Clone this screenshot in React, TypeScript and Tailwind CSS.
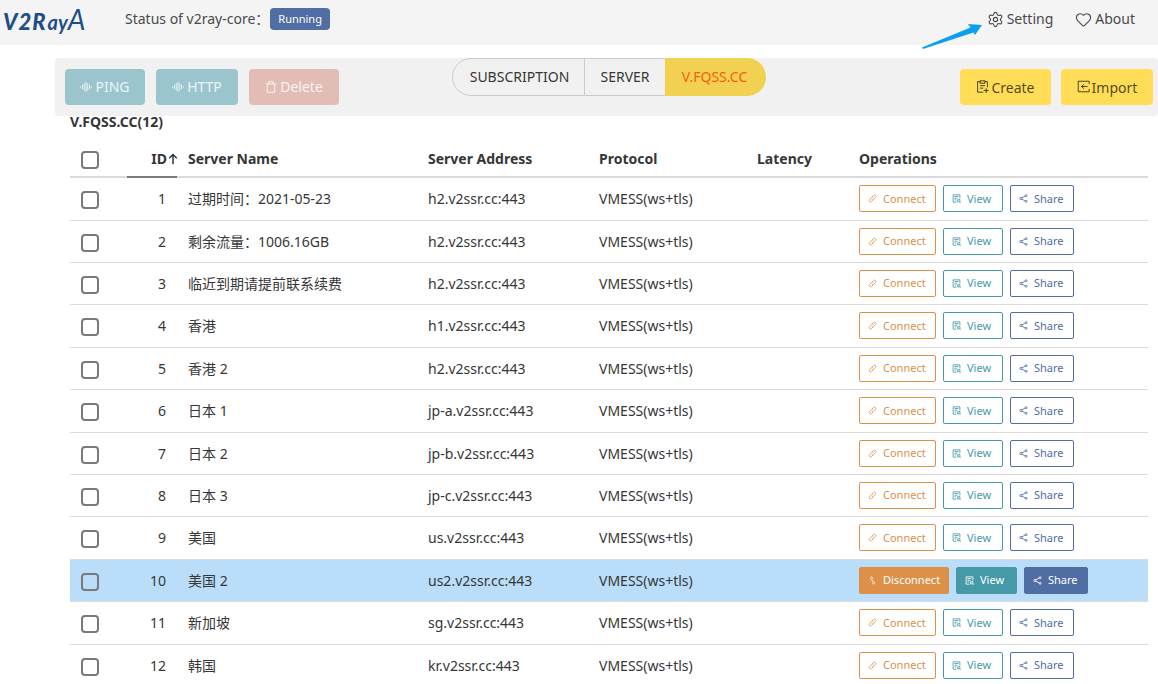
import React from "react";
import { Heart, Settings } from "lucide-react";

const paths = {
  wave: "M1 7v2M3.300 5v6M5.700 3v10M8 1v14M10.300 3v10M12.700 5v6M15 7v2",
  trash: "M1 4h14M5 4V1h6v3M3 4v11h10V4",
  clipboard: "M5 2H2v13h7M11 2h3v7M5 1h6v3H5zM5 7h6M5 10h4M12.500 10v6M9.500 13h6",
  importIn: "M15 5V1.500H1.500v13H15V11M5.500 8H13M8.500 5.500L5.500 8l3 2.500",
  link: "M7 5.500l3-3a2.500 2.500 0 0 1 3.500 3.500l-3.500 3.500a2.500 2.500 0 0 1-3.500 0M9 10.500l-3 3A2.500 2.500 0 0 1 2.500 10L6 6.500a2.500 2.500 0 0 1 3.500 0",
  unlink: "M7 7L4.500 4.500a2 2 0 0 1 3-2.500l1 3M9 9l2.500 2.500a2 2 0 0 1-3 2.500l-1-3M6.500 7.500l3 1",
  view: "M14 8V1.500H2v13h6M4.500 4.500h7M4.500 7.500h5M4.500 10.500h3M10 10h4v4h-4zM14 14l1.500 1",
  share: "M5 7l6-3.500M5 9l6 3.500M1.500 8a2 2 0 1 0 4 0 2 2 0 1 0-4 0M11 3a1.700 1.700 0 1 0 3.400 0A1.700 1.700 0 1 0 11 3M11 13a1.700 1.700 0 1 0 3.400 0 1.700 1.700 0 1 0-3.400 0",
  up: "M8 15V2M3 7l5-5 5 5",
};
type IconName = keyof typeof paths;
type IconProps = { name: IconName; className?: string; sw?: number };

function Icon({ name, className, sw = 1 }: IconProps) {
  return (
    <svg viewBox="0 0 16 16" className={className} fill="none" stroke="currentColor" strokeWidth={sw} strokeLinejoin="round" aria-hidden="true">
      <path d={paths[name]} />
    </svg>
  );
}

const servers: [string, string][] = [
  ["过期时间：2021-05-23", "h2"],
  ["剩余流量：1006.16GB", "h2"],
  ["临近到期请提前联系续费", "h2"],
  ["香港", "h1"],
  ["香港 2", "h2"],
  ["日本 1", "jp-a"],
  ["日本 2", "jp-b"],
  ["日本 3", "jp-c"],
  ["美国", "us"],
  ["美国 2", "us2"],
  ["新加坡", "sg"],
  ["韩国", "kr"],
];
const CONNECTED = 10;

const checkbox = "block size-[18px] appearance-none rounded border-2 border-[#7a7a7a] checked:bg-[#506da4]";
const tool = "flex h-9 items-center justify-center rounded text-sm text-white/80";
const add = "flex h-9 items-center justify-center rounded bg-[#ffdd57] pt-0.5 text-black/70";
const op = "flex h-[27px] items-center rounded-xs border pl-2 text-[11px]";

function Operations({ active }: { active: boolean }) {
  return (
    <div className="flex gap-[7px]">
      <button className={`${op} border-[#dc9048] ${active ? "w-[90px] bg-[#dc9048] text-white" : "w-[77px] bg-white text-[#dc9048]"}`}>
        <Icon name={active ? "unlink" : "link"} className="mr-[6px] size-[9px]" sw={1.4} />
        {active ? "Disconnect" : "Connect"}
      </button>
      <button className={`${op} border-[#4699a7] ${active ? "w-[61px] bg-[#4699a7] text-white" : "w-[60px] bg-white text-[#4699a7]"}`}>
        <Icon name="view" className="mr-[6px] size-[9px]" sw={1.5} />
        View
      </button>
      <button className={`${op} w-16 border-[#506da4] ${active ? "bg-[#506da4] text-white" : "bg-white text-[#506da4]"}`}>
        <Icon name="share" className="mr-[6px] size-[9px]" sw={1.5} />
        Share
      </button>
    </div>
  );
}

export default function App() {
  return (
    <div className="relative h-screen overflow-hidden bg-white font-['Noto_Sans','Noto_Sans_CJK_SC',sans-serif] text-sm text-[#363636]">
      <header className="flex h-[45px] items-start bg-[#f4f4f4] text-[#4a4a4a]">
        <a href="#home" className="flex h-[38px] w-[125px] items-baseline pl-[3px] font-['Lato'] leading-[38px] text-[#1f4e86] italic">
          <span className="flex gap-px text-[22px] font-black"><span>V</span><span>2</span><span>R</span></span>
          <span className="ml-0.5 text-xl font-bold">ay</span>
          <span className="text-[28px] font-normal">A</span>
        </a>
        <div className="flex h-[38px] items-center">
          <span>Status of v2ray-core：</span>
          <span className="ml-px flex h-[22px] items-center rounded bg-[#506da4] px-2 text-[11px] text-white">Running</span>
        </div>
        <nav className="mr-[23px] ml-auto flex h-[38px] items-center gap-[22px]">
          <a href="#setting" className="flex items-center gap-[3px]">
            <Settings className="size-[17px]" strokeWidth={1.6} />
            Setting
          </a>
          <a href="#about" className="flex items-center gap-[3px]">
            <Heart className="size-[17px]" strokeWidth={1.6} />
            About
          </a>
        </nav>
      </header>
      <svg className="absolute top-6 right-[176px] h-[25px] w-[60px]" viewBox="0 0 60 25" aria-hidden="true">
        <path d="M0 23.500L48.500 3.500 46 0 60 1 53 11 51.500 8.500 1 25z" fill="#0aa1ec" />
      </svg>

      <main className="mt-[13px] pl-[55px]">
        <div className="flex h-[58px] rounded bg-[#f1f1f1] pr-[5px] pl-[10px]">
          <div className="flex flex-1 items-center gap-[11px]">
            <button className={`${tool} w-20 bg-[#9bc5cd]`}><Icon name="wave" className="mr-[3px] size-3" sw={1.2} />PING</button>
            <button className={`${tool} w-[82px] bg-[#9bc5cd]`}><Icon name="wave" className="mr-[3px] size-3" sw={1.2} />HTTP</button>
            <button className={`${tool} w-[90px] bg-[#e1bdb5]`}><Icon name="trash" className="mr-[3px] size-3" sw={1.3} />Delete</button>
          </div>
          <div className="flex h-[38px]">
            <button className="w-[133px] rounded-l-full border border-[#cbcbcb] pl-0.5">SUBSCRIPTION</button>
            <button className="w-20 border-y border-[#cbcbcb]">SERVER</button>
            <button className="w-[101px] rounded-r-full bg-[#f2d052] pr-0.5 text-[#f4610c]">V.FQSS.CC</button>
          </div>
          <div className="flex flex-1 items-center justify-end gap-[10px]">
            <button className={`${add} w-[91px]`}><Icon name="clipboard" className="mr-0.5 mb-1 size-[13px]" sw={1.2} />Create</button>
            <button className={`${add} w-[92px]`}><Icon name="importIn" className="mr-0.5 mb-1 size-[13px]" sw={1.2} />Import</button>
          </div>
        </div>

        <section className="mr-[10px] ml-[15px]">
          <h1 className="h-[25px] text-sm leading-3 font-bold">V.FQSS.CC(12)</h1>
          <table className="w-full table-fixed border-separate border-spacing-0 text-left">
            <colgroup>
              <col className="w-[57px]" />
              <col className="w-[50px]" />
              <col className="w-[241px]" />
              <col className="w-[171px]" />
              <col className="w-[158px]" />
              <col className="w-[102px]" />
              <col />
            </colgroup>
            <thead>
              <tr className="h-[37px] *:border-b-2 *:border-[#dbdbdb] *:p-0">
                <th className="pt-0.5! pl-[11px]!"><input type="checkbox" aria-label="Select all" className={checkbox} /></th>
                <th className="border-[#7a7a7a]!"><span className="-mr-0.5 flex items-center justify-end">ID<Icon name="up" className="size-3" sw={2} /></span></th>
                <th className="pl-[11px]!">Server Name</th>
                <th className="pl-[10px]!">Server Address</th>
                <th className="pl-[10px]!">Protocol</th>
                <th className="pl-[10px]!">Latency</th>
                <th className="pl-[10px]!">Operations</th>
              </tr>
            </thead>
            <tbody>
              {servers.map(([name, host], i) => {
                const active = i + 1 === CONNECTED;
                return (
                  <tr key={i} className={`h-[42px] nth-[5n+1]:h-[43px] nth-[5n+4]:h-[43px] *:border-b *:border-[#dbdbdb] *:p-0 ${active ? "bg-[#badefa]" : ""}`}>
                    <td className="pt-0.5! pl-[11px]!"><input type="checkbox" aria-label={name} className={checkbox} /></td>
                    <td className="pr-[11px]! text-right">{i + 1}</td>
                    <td className="pl-[11px]!">{name}</td>
                    <td className="pl-[10px]!">{host}.v2ssr.cc:443</td>
                    <td className="pl-[10px]!">VMESS(ws+tls)</td>
                    <td />
                    <td className="pb-px! pl-[10px]!"><Operations active={active} /></td>
                  </tr>
                );
              })}
            </tbody>
          </table>
        </section>
      </main>
    </div>
  );
}
